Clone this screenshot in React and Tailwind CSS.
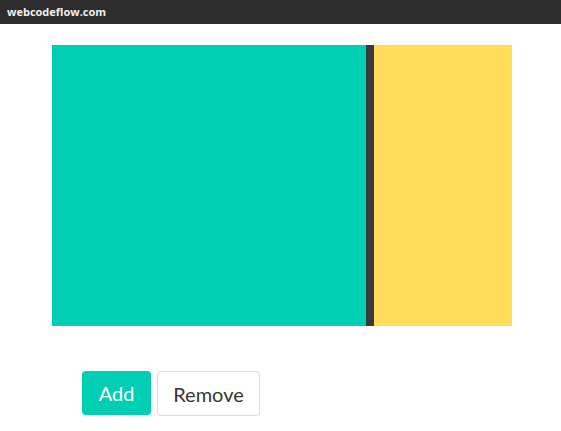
export default function App() {
  return (
    <div className="min-h-screen bg-white" style={{ fontFamily: 'Lato, "Noto Sans", sans-serif' }}>
      <div className="h-6 bg-[#2d2d2d] px-[7px] flex items-center">
        <span className="text-[11px] font-bold text-[#f0f0f0]" style={{ fontFamily: '"Open Sans", sans-serif' }}>
          webcodeflow.com
        </span>
      </div>

      <div className="pl-[52px] pt-[21px]">
        <div className="flex w-[460px] h-[281px]">
          <div className="w-[314px] bg-[#00cfb4]" />
          <div className="w-2 bg-[#393939]" />
          <div className="flex-1 bg-[#ffdb5a]" />
        </div>
      </div>

      <div className="flex gap-[6px] pl-[82px] pt-[45px]">
        <button className="h-[44px] w-[69px] rounded-[4px] bg-[#00cfb4] text-white text-[20px]">
          Add
        </button>
        <button className="h-[45px] w-[103px] rounded-[4px] border border-[#dbdbdb] bg-white text-[#363636] text-[20px]">
          Remove
        </button>
      </div>
    </div>
  );
}
